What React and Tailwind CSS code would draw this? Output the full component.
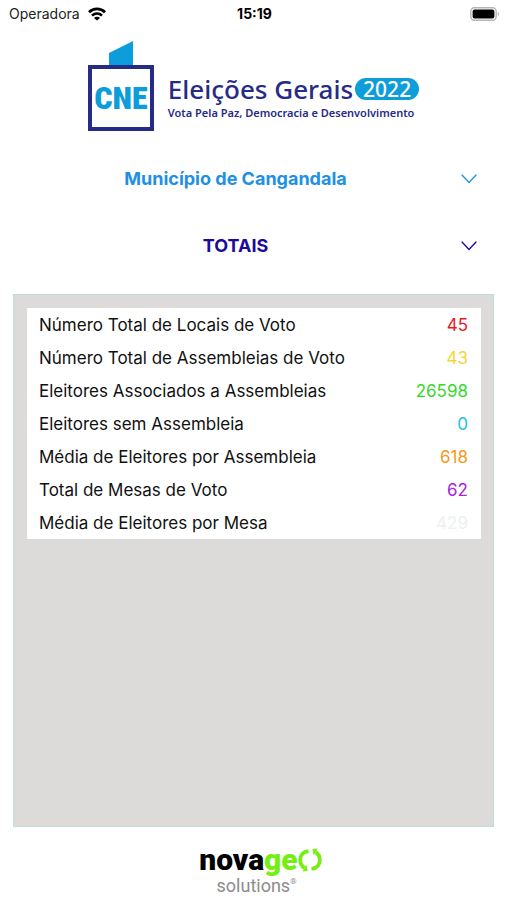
import React, { useState } from "react";

const rows = [
  { label: "Número Total de Locais de Voto", value: "45", color: "text-[#e8191c]" },
  { label: "Número Total de Assembleias de Voto", value: "43", color: "text-[#efd83a]" },
  { label: "Eleitores Associados a Assembleias", value: "26598", color: "text-[#35d92c]" },
  { label: "Eleitores sem Assembleia", value: "0", color: "text-[#22bfe6]" },
  { label: "Média de Eleitores por Assembleia", value: "618", color: "text-[#f7981d]" },
  { label: "Total de Mesas de Voto", value: "62", color: "text-[#a922dc]" },
  { label: "Média de Eleitores por Mesa", value: "429", color: "text-[#edf1f1]" },
];

const WifiIcon = () => (
  <svg viewBox="0 0 18 14" className="h-[14px] w-[18px]" fill="none" stroke="#000">
    <path d="M1 5.2a11.3 11.3 0 0 1 16 0" strokeWidth="2.8" />
    <path d="M4 8.6a7 7 0 0 1 10 0" strokeWidth="2.5" />
    <path d="M9 13.6 6 10.9a4.2 4.2 0 0 1 6 0Z" fill="#000" stroke="none" />
  </svg>
);

const BatteryIcon = () => (
  <svg viewBox="0 0 30 14" className="h-[14px] w-[30px]">
    <rect x="0.8" y="0.8" width="25.4" height="12.4" rx="3.6" fill="#fff" stroke="#b5b5b5" strokeWidth="1.4" />
    <rect x="2.6" y="2.4" width="21.8" height="9.2" rx="2" fill="#000" />
    <path d="M27.8 4.8v4.4c1.8-.8 1.8-3.6 0-4.4Z" fill="#b5b5b5" />
  </svg>
);

const StatusBar = () => (
  <div className="grid h-7 grid-cols-3 items-center pl-[9px] pr-[7px] text-[14px] leading-5">
    <div className="flex items-center gap-2 text-[#222]">
      Operadora
      <WifiIcon />
    </div>
    <div className="text-center font-bold text-black">15:19</div>
    <div className="flex justify-end">
      <BatteryIcon />
    </div>
  </div>
);

const CneLogo = () => (
  <div className="flex w-[66px] flex-col items-center">
    <svg viewBox="0 0 24 24" className="h-6 w-6" fill="#0d9ddb">
      <path d="M0 12 24 0v24H0Z" />
    </svg>
    <div className="flex h-[66px] w-full items-center justify-center border-4 border-[#262b86] font-['Roboto_Condensed','Liberation_Sans_Narrow',Roboto,sans-serif] text-[32px] font-black text-[#0d9ddb]">
      CNE
    </div>
  </div>
);

const Header = () => (
  <header className="flex items-end justify-center gap-[14px] pt-[13px] font-['Noto_Sans',sans-serif] text-[#262b86]">
    <CneLogo />
    <div className="pb-[10px]">
      <div className="flex items-center gap-[2px]">
        <h1 className="text-[26px] font-medium leading-8">Eleições Gerais</h1>
        <span className="rounded-full bg-[#0d9ddb] px-2 text-[21px] font-medium leading-[22px] text-white">
          2022
        </span>
      </div>
      <p className="text-[11px] font-semibold leading-4">
        Vota Pela Paz, Democracia e Desenvolvimento
      </p>
    </div>
  </header>
);

const Dropdown = ({ label, options, className }) => {
  const [value, setValue] = useState(options[0]);

  return (
    <div className={`relative ${className}`}>
      <select
        aria-label={label}
        value={value}
        onChange={(e) => setValue(e.target.value)}
        className="h-10 w-full appearance-none bg-transparent pr-9 text-center text-[18px] font-bold [text-align-last:center]"
      >
        {options.map((option) => (
          <option key={option}>{option}</option>
        ))}
      </select>
      <svg
        viewBox="0 0 16 10"
        className="pointer-events-none absolute right-[17px] top-4 h-[10px] w-4"
        fill="none"
        stroke="currentColor"
        strokeWidth="1.3"
        strokeLinecap="round"
        strokeLinejoin="round"
      >
        <path d="M1 1l7 7.5L15 1" />
      </svg>
    </div>
  );
};

const Footer = () => (
  <footer className="flex h-[73px] flex-col items-center pl-[14px] pt-[17px] font-['Roboto',sans-serif]">
    <div className="flex items-center text-[30px] font-black leading-8 text-black">
      nova<span className="text-[#76ee12]">ge</span>
      <svg viewBox="0 0 24 24" className="h-6 w-6" fill="none" stroke="#76ee12" strokeWidth="3.8">
        <path d="M10.500 3.200C5 3.700 2.200 7.500 2.200 12c0 3.500 1.600 6.200 4.300 7.900" />
        <path d="M13.500 20.800c5.500-.5 8.300-4.300 8.300-8.800 0-3.500-1.600-6.200-4.300-7.900" />
        <path d="M4.500 23.500l5-.5-1-6.500ZM19.500.5l-5 .5 1 6.500Z" fill="#76ee12" stroke="none" />
      </svg>
    </div>
    <div className="flex items-start pr-2 text-[18px] leading-5 text-[#8c8c8c]">
      solutions<span className="text-[8px] leading-3">®</span>
    </div>
  </footer>
);

const App = () => {
  return (
    <div className="flex min-h-screen flex-col bg-white font-['Inter',sans-serif]">
      <StatusBar />
      <Header />

      <div className="px-[13px]">
        <Dropdown
          label="Município"
          options={["Município de Cangandala"]}
          className="mt-[27px] text-[#1e90e6]"
        />
        <Dropdown label="Dados" options={["TOTAIS"]} className="mt-[27px] text-[#1b0a9c]" />
      </div>

      {/* Totals */}
      <main className="mx-[13px] mt-[29px] flex-1 border border-[#bfdcd8] bg-[#dddbda] py-[13px] pl-[13px] pr-3">
        <table className="w-full bg-white text-[17px] leading-5">
          <tbody>
            {rows.map((row) => (
              <tr key={row.label} className="h-[33px]">
                <th scope="row" className="pl-3 text-left font-normal text-[#111]">
                  {row.label}
                </th>
                <td className={`pr-[13px] text-right ${row.color}`}>{row.value}</td>
              </tr>
            ))}
          </tbody>
        </table>
      </main>

      <Footer />
    </div>
  );
};

export default App;
